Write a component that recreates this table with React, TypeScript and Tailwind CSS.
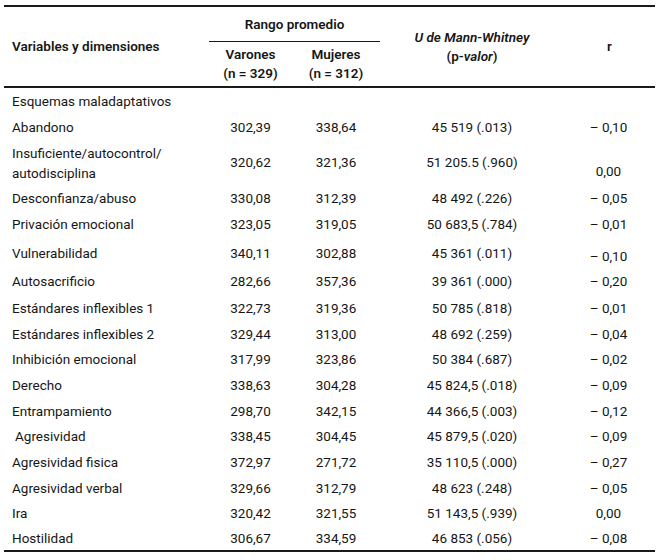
type Row = {
  label: string;
  v?: string;
  m?: string;
  u?: string;
  r?: string;
  h: string;
  rCell?: string;
  labelCell?: string;
};

// alturas medidas fila a fila, la tabla original no es regular
const rows: Row[] = [
  { label: "Esquemas maladaptativos", h: "h-[27px]" },
  { label: "Abandono", v: "302,39", m: "338,64", u: "45 519 (.013)", r: "– 0,10", h: "h-[25px]" },
  {
    label: "Insuficiente/autocontrol/ autodisciplina",
    v: "320,62",
    m: "321,36",
    u: "51 205.5 (.960)",
    r: "0,00",
    h: "h-[45px]",
    rCell: "items-end pb-[4px]",
    labelCell: "leading-[20px] w-[170px]",
  },
  { label: "Desconfianza/abuso", v: "330,08", m: "312,39", u: "48 492 (.226)", r: "– 0,05", h: "h-[26px]" },
  { label: "Privación emocional", v: "323,05", m: "319,05", u: "50 683,5 (.784)", r: "– 0,01", h: "h-[27px]" },
  {
    label: "Vulnerabilidad",
    v: "340,11",
    m: "302,88",
    u: "45 361 (.011)",
    r: "– 0,10",
    h: "h-[30px]",
    rCell: "pt-[8px]",
  },
  { label: "Autosacrificio", v: "282,66", m: "357,36", u: "39 361 (.000)", r: "– 0,20", h: "h-[27px]" },
  { label: "Estándares inflexibles 1", v: "322,73", m: "319,36", u: "50 785 (.818)", r: "– 0,01", h: "h-[26px]" },
  { label: "Estándares inflexibles 2", v: "329,44", m: "313,00", u: "48 692 (.259)", r: "– 0,04", h: "h-[26px]" },
  { label: "Inhibición emocional", v: "317,99", m: "323,86", u: "50 384 (.687)", r: "– 0,02", h: "h-[25px]" },
  { label: "Derecho", v: "338,63", m: "304,28", u: "45 824,5 (.018)", r: "– 0,09", h: "h-[26px]" },
  { label: "Entrampamiento", v: "298,70", m: "342,15", u: "44 366,5 (.003)", r: "– 0,12", h: "h-[26px]" },
  {
    label: "Agresividad",
    v: "338,45",
    m: "304,45",
    u: "45 879,5 (.020)",
    r: "– 0,09",
    h: "h-[25px]",
    labelCell: "pl-[3px]",
  },
  { label: "Agresividad fisica", v: "372,97", m: "271,72", u: "35 110,5 (.000)", r: "– 0,27", h: "h-[26px]" },
  { label: "Agresividad verbal", v: "329,66", m: "312,79", u: "48 623 (.248)", r: "– 0,05", h: "h-[26px]" },
  { label: "Ira", v: "320,42", m: "321,55", u: "51 143,5 (.939)", r: "0,00", h: "h-[25px]" },
  { label: "Hostilidad", v: "306,67", m: "334,59", u: "46 853 (.056)", r: "– 0,08", h: "h-[24px]" },
];

const cols = "grid grid-cols-[205px_83px_88px_184px_1fr]";

export default function App() {
  return (
    <div className="w-[660px] h-[560px] bg-white pt-[5px] pl-[4px] pr-[5px] font-['Roboto','Liberation_Sans',sans-serif] text-[13.5px] text-[#161616]">
      <div className="border-t-2 border-b-2 border-[#1a1a1a]">
        {/* cabecera */}
        <div className={`${cols} h-[81px] border-b-2 border-[#1a1a1a] font-semibold`}>
          <div className="row-span-2 flex items-center pl-[8px]">Variables y dimensiones</div>
          <div className="col-span-2 h-[35px] flex items-center justify-center border-b border-[#1a1a1a]">
            Rango promedio
          </div>
          <div className="row-span-2 col-start-4 row-start-1 flex flex-col items-center justify-center leading-[19px] pt-[1px]">
            <span className="italic">U de Mann-Whitney</span>
            <span>
              (p-<span className="italic">valor</span>)
            </span>
          </div>
          <div className="row-span-2 col-start-5 row-start-1 flex items-center justify-center">r</div>
          <div className="col-start-2 row-start-2 flex flex-col items-center justify-center leading-[19px] pb-[2px]">
            <span>Varones</span>
            <span>(n = 329)</span>
          </div>
          <div className="col-start-3 row-start-2 flex flex-col items-center justify-center leading-[19px] pb-[2px]">
            <span>Mujeres</span>
            <span>(n = 312)</span>
          </div>
        </div>

        {/* cuerpo */}
        {rows.map((row) => (
          <div key={row.label} className={`${cols} ${row.h}`}>
            <div className={`flex items-center pl-[8px] ${row.labelCell ?? ""}`}>
              <span className={row.labelCell ?? ""}>{row.label}</span>
            </div>
            <div className="flex items-center justify-center">{row.v}</div>
            <div className="flex items-center justify-center">{row.m}</div>
            <div className="flex items-center justify-center">{row.u}</div>
            <div className={`flex justify-center pr-[2px] ${row.rCell ?? "items-center"}`}>{row.r}</div>
          </div>
        ))}
      </div>
    </div>
  );
}
